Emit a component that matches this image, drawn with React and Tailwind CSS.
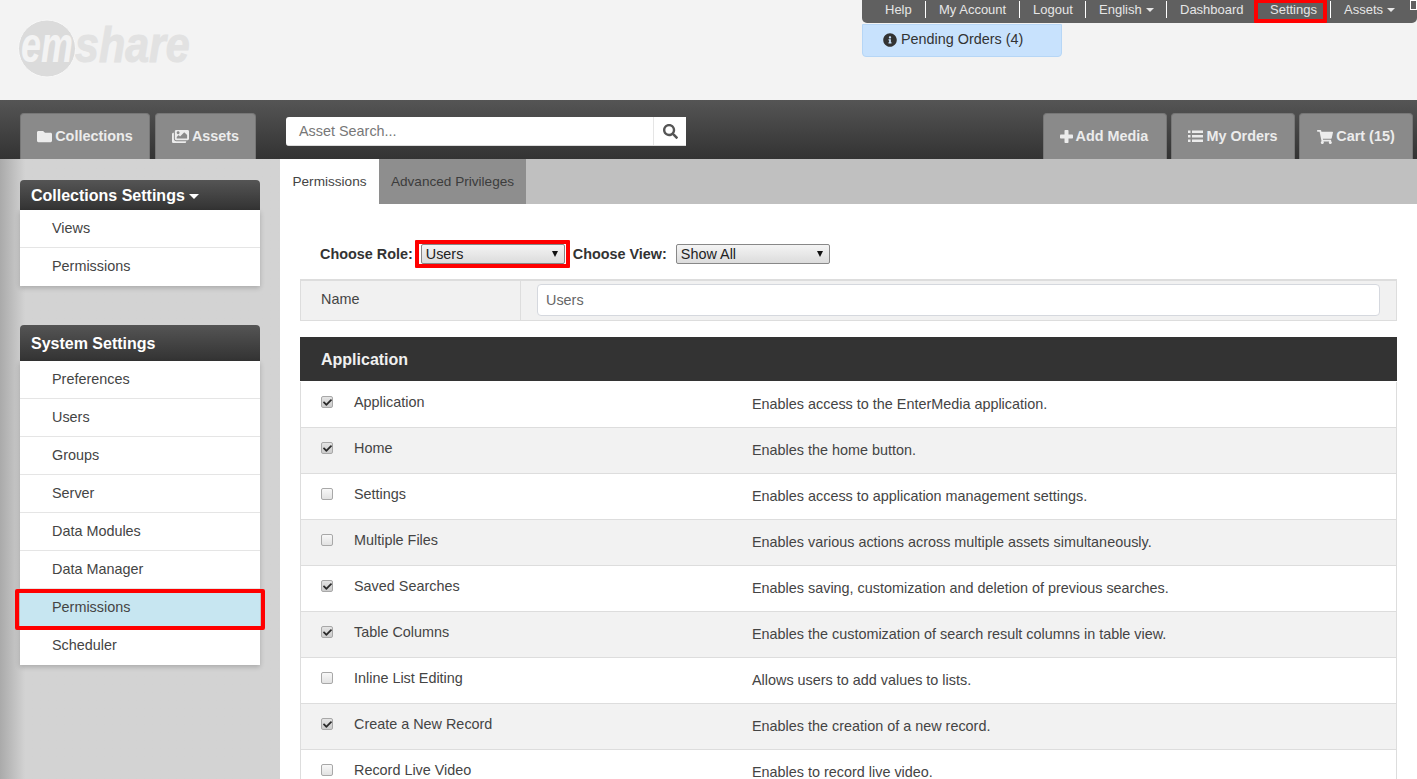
import React from "react";
import { FaFolder, FaImages, FaShoppingCart, FaSearch, FaInfoCircle, FaCheck } from "react-icons/fa";

const Caret = ({ big }) => <span className={`inline-block ml-1 align-middle w-0 h-0 border-t-current ${big ? "border-x-[5px] border-x-transparent border-t-[5px]" : "border-x-[4px] border-x-transparent border-t-[4px]"}`} />;

const ListIcon = () => (
  <svg width="15" height="13" viewBox="0 0 15 13" fill="currentColor">
    <rect x="0" y="0.5" width="2.5" height="2.5" /><rect x="4" y="0.5" width="11" height="2.5" />
    <rect x="0" y="5" width="2.5" height="2.5" /><rect x="4" y="5" width="11" height="2.5" />
    <rect x="0" y="9.5" width="2.5" height="2.5" /><rect x="4" y="9.5" width="11" height="2.5" />
  </svg>
);

const PlusIcon = () => (
  <svg width="13" height="13" viewBox="0 0 13 13" fill="currentColor">
    <rect x="4.5" y="0" width="4" height="13" rx="0.8" /><rect x="0" y="4.5" width="13" height="4" rx="0.8" />
  </svg>
);

function Logo() {
  return (
    <svg width="180" height="62" viewBox="0 0 180 62" className="block overflow-visible">
      <circle cx="29" cy="30.5" r="28.5" fill="#dbdbdb" stroke="#f8f8f8" strokeWidth="1" />
      <text transform="translate(3 44) scale(0.72 1)" fontFamily="'Liberation Sans', sans-serif" fontWeight="700" fontStyle="italic" fontSize="50" fill="#f3f3f3">em</text>
      <text transform="translate(57 44) scale(0.86 1)" fontFamily="'Liberation Sans', sans-serif" fontWeight="700" fontStyle="italic" fontSize="50" fill="#e2e2e2" stroke="#e2e2e2" strokeWidth="1">share</text>
    </svg>
  );
}

function TopLink({ children, className = "", divider = true }) {
  return <div className={`h-[17px] flex items-center whitespace-nowrap ${divider ? "border-r border-white" : ""} ${className}`}>{children}</div>;
}

function TopBar() {
  return (
    <div className="relative h-[23px] w-[555px] bg-[#606060] rounded-b-[5px] flex items-start pt-[1px] text-[13px] text-[#e6e6e6]">
      <TopLink className="pl-[23px] w-[64px]">Help</TopLink>
      <TopLink className="pl-[13px] w-[94px]">My Account</TopLink>
      <TopLink className="pl-[13px] w-[66px]">Logout</TopLink>
      <TopLink className="pl-[13px] w-[81px]">English<Caret /></TopLink>
      <TopLink className="pl-[13px] w-[88px]" divider={false}>Dashboard</TopLink>
      <div className="relative h-[17px] flex items-center pl-[15px] w-[76px] border-r border-white">
        Settings
        <span className="absolute left-[-1px] top-[-2px] w-[73px] h-[24px] border-[4px] border-[#f00] rounded-[1px]" />
      </div>
      <TopLink className="pl-[13px]" divider={false}>Assets<Caret /></TopLink>
      <span className="absolute right-0 top-0 w-[7px] h-[10px] border border-white bg-[#606060]" />
    </div>
  );
}

function NavTab({ icon, label, className = "" }) {
  return (
    <div className={`h-[46px] bg-[#8a8a8a] border-t border-x border-[#777] rounded-t-[4px] flex items-center justify-center gap-[3px] text-[14.4px] font-bold text-[#ececec] ${className}`}>
      {icon}
      <span>{label}</span>
    </div>
  );
}

function NavBar() {
  return (
    <div className="h-[59px] bg-gradient-to-b from-[#555555] to-[#333333] flex items-end pl-[20px] pr-[4px]">
      <NavTab className="w-[130px]" icon={<FaFolder className="text-[15px]" />} label="Collections" />
      <NavTab className="w-[101px] ml-[5px]" icon={<FaImages className="text-[17px]" />} label="Assets" />
      <div className="ml-[30px] mb-[13px] w-[400px] h-[29px] flex bg-white rounded-l-[3px] border-b border-[#ddd]">
        <div className="flex-1 flex items-center pl-[13px] pt-[1px] text-[14.4px] text-[#777] border-r border-[#e5e5e5]">Asset Search...</div>
        <div className="w-[32px] flex items-center justify-center text-[#555]"><FaSearch className="text-[15px]" /></div>
      </div>
      <div className="ml-auto flex gap-[4px]">
        <NavTab className="w-[124px] pr-[2px]" icon={<PlusIcon />} label="Add Media" />
        <NavTab className="w-[124px]" icon={<ListIcon />} label="My Orders" />
        <NavTab className="w-[114px]" icon={<FaShoppingCart className="text-[16px]" />} label="Cart (15)" />
      </div>
    </div>
  );
}

function SideItem({ label, active, last }) {
  return (
    <div className={`relative h-[38px] pl-[32px] flex items-center text-[14.4px] text-[#444] ${active ? "bg-[#c7e6f1]" : ""} ${last || active ? "" : "border-b border-[#e5e5e5]"}`}>
      {label}
      {active && <span className="absolute left-[-5px] right-[-5px] top-0 h-[41px] border-[4px] border-[#f00] rounded-[2px]" />}
    </div>
  );
}

function SidePanel({ title, caret, tall, items, activeLabel, className = "" }) {
  return (
    <div className={`w-[240px] ${className}`}>
      <div className={`${tall ? "h-[36px]" : "h-[30px]"} bg-gradient-to-b from-[#555555] to-[#333333] rounded-t-[4px] flex items-center pl-[11px] pt-[2px] text-[16px] font-bold text-white`}>
        {title}{caret && <Caret big />}
      </div>
      <div className="bg-white shadow-[0_2px_5px_rgba(0,0,0,0.2)]">
        {items.map((it, i) => <SideItem key={it} label={it} active={it === activeLabel} last={i === items.length - 1} />)}
      </div>
    </div>
  );
}

function Sidebar() {
  return (
    <aside className="w-[280px] shrink-0 bg-[#d3d3d3] relative pl-[20px] pt-[21px] bg-gradient-to-r from-[#aaaaaa] via-[#d3d3d3] via-[9%] to-[#d3d3d3]">
      <SidePanel title="Collections Settings" caret items={["Views", "Permissions"]} />
      <SidePanel className="mt-[39px]" title="System Settings" tall activeLabel="Permissions"
        items={["Preferences", "Users", "Groups", "Server", "Data Modules", "Data Manager", "Permissions", "Scheduler"]} />
    </aside>
  );
}

function FakeSelect({ value, width }) {
  return (
    <div className={`${width} h-[20px] flex items-center justify-between pl-[4px] pr-[6px] bg-gradient-to-b from-[#f4f4f4] to-[#dcdcdc] border border-[#888] rounded-[2px] text-[14.4px] text-[#222]`}>
      <span className="font-normal pt-[1px]">{value}</span>
      <span className="w-0 h-0 border-x-[3px] border-x-transparent border-t-[6px] border-t-[#111]" />
    </div>
  );
}

function Checkbox({ checked }) {
  return (
    <div className={`w-[12px] h-[12px] rounded-[2px] border border-[#a8a8a8] flex items-center justify-center ${checked ? "bg-gradient-to-b from-[#e4e4e4] to-[#cccccc]" : "bg-gradient-to-b from-[#f8f8f8] to-[#e2e2e2]"}`}>
      {checked && <FaCheck className="text-[9px] text-[#2a2a2a]" />}
    </div>
  );
}

const rows = [
  ["Application", "Enables access to the EnterMedia application.", true],
  ["Home", "Enables the home button.", true],
  ["Settings", "Enables access to application management settings.", false],
  ["Multiple Files", "Enables various actions across multiple assets simultaneously.", false],
  ["Saved Searches", "Enables saving, customization and deletion of previous searches.", true],
  ["Table Columns", "Enables the customization of search result columns in table view.", true],
  ["Inline List Editing", "Allows users to add values to lists.", false],
  ["Create a New Record", "Enables the creation of a new record.", true],
  ["Record Live Video", "Enables to record live video.", false],
];

function Row({ label, desc, checked, odd }) {
  return (
    <div className={`h-[46px] shrink-0 flex border-l border-r border-b border-[#ddd] text-[14.4px] text-[#444] ${odd ? "bg-[#f2f2f2]" : "bg-white"}`}>
      <div className="w-[32px] pl-[20px] pt-[14px]"><Checkbox checked={checked} /></div>
      <div className="w-[419px] pl-[21px] pt-[10px]">{label}</div>
      <div className="flex-1 pt-[12px]">{desc}</div>
    </div>
  );
}

function Main() {
  return (
    <main className="flex-1 min-w-0 bg-white flex flex-col">
      <div className="h-[45px] shrink-0 bg-[#c0c0c0] flex text-[13.6px]">
        <div className="w-[99px] bg-white flex items-center justify-center pt-[1px] text-[#444]">Permissions</div>
        <div className="w-[147px] bg-[#8e8e8e] flex items-center justify-center pt-[1px] text-[#3c3c3c]">Advanced Privileges</div>
      </div>
      <div className="pl-[20px] pr-[20px] pt-[36px]">
        <div className="h-[28px] flex items-center pl-[20px] text-[14.4px] font-bold text-[#333]">
          <span className="whitespace-nowrap pt-[1px]">Choose Role:</span>
          <div className="relative ml-[8px]">
            <FakeSelect value="Users" width="w-[144px]" />
            <span className="absolute left-[-6px] right-[-5px] top-[-4px] bottom-[-4px] border-[4px] border-[#f00] rounded-[1px]" />
          </div>
          <span className="ml-[8px] whitespace-nowrap pt-[1px]">Choose View:</span>
          <div className="ml-[9px]"><FakeSelect value="Show All" width="w-[154px]" /></div>
        </div>
        <div className="mt-[11px] h-[42px] flex bg-[#f1f1f1] border-t-2 border-b border-x border-[#ddd] text-[14.4px] text-[#444]">
          <div className="w-[220px] pl-[20px] pt-[8px] border-r border-[#ddd]">Name</div>
          <div className="flex-1 pl-[16px] pr-[16px] pt-[3px]">
            <div className="h-[32px] bg-white border border-[#d5d8de] rounded-[4px] flex items-center pl-[8px] pt-[1px] text-[#666]">Users</div>
          </div>
        </div>
        <div className="mt-[16px] h-[44px] bg-[#333] flex items-center pl-[21px] pt-[2px] text-[16px] font-bold text-[#f0f0f0]">Application</div>
        <div className="flex flex-col pt-[1px]">
          {rows.map(([l, d, c], i) => <Row key={l} label={l} desc={d} checked={c} odd={i % 2 === 1} />)}
        </div>
      </div>
    </main>
  );
}

export default function App() {
  return (
    <div className="w-[1417px] h-[779px] overflow-hidden bg-[#f3f3f3] flex flex-col font-['Liberation_Sans',Arial,sans-serif]">
      <header className="h-[100px] shrink-0 flex justify-between">
        <div className="pl-[18px] pt-[18px]"><Logo /></div>
        <div>
          <TopBar />
          <div className="mt-[1px] w-[200px] h-[33px] bg-[#c8e2fd] border border-[#b6d6f6] rounded-b-[4px] flex items-center gap-[4px] pl-[20px] pb-[2px] text-[14.4px] text-[#333]">
            <FaInfoCircle className="text-[14px]" /><span>Pending Orders (4)</span>
          </div>
        </div>
      </header>
      <NavBar />
      <div className="flex-1 min-h-0 flex overflow-hidden">
        <Sidebar />
        <Main />
      </div>
    </div>
  );
}
